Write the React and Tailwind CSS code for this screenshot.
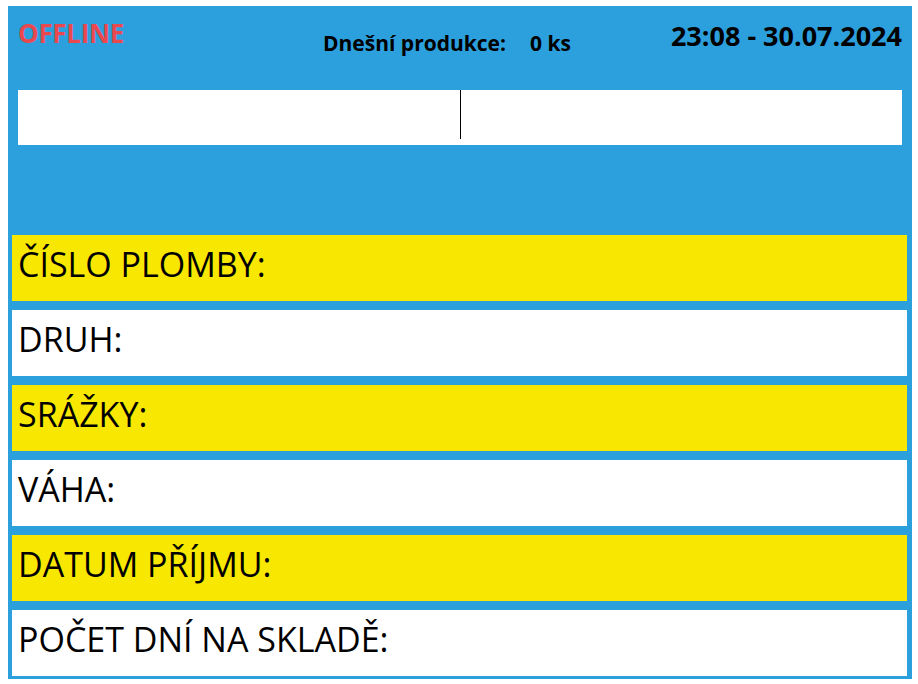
const rows = [
  { label: "ČÍSLO PLOMBY:", bg: "bg-[#f8e700]" },
  { label: "DRUH:", bg: "bg-white" },
  { label: "SRÁŽKY:", bg: "bg-[#f8e700]" },
  { label: "VÁHA:", bg: "bg-white" },
  { label: "DATUM PŘÍJMU:", bg: "bg-[#f8e700]" },
  { label: "POČET DNÍ NA SKLADĚ:", bg: "bg-white" },
];

const App = () => {
  return (
    <div
      className="w-[918px] h-[684px] bg-white pt-[6px] pl-[8px] overflow-hidden"
      style={{ fontFamily: '"Open Sans", "Noto Sans", sans-serif' }}
    >
      <div className="w-[904px] h-[673px] bg-[#2c9fdd] flex flex-col">
        {/* Header */}
        <div className="h-[84px] flex items-start px-[10px]">
          <div className="w-[305px] pt-[14px] text-[26px] font-bold text-[#e9484f] leading-none tracking-[-0.3px]">
            OFFLINE
          </div>
          <div className="pt-[27px] flex text-[21px] font-bold text-black leading-none">
            <span>Dnešní produkce:</span>
            <span className="ml-[24px]">0 ks</span>
          </div>
          <div className="ml-auto pt-[16px] text-[27px] font-bold text-black leading-none">
            23:08 - 30.07.2024
          </div>
        </div>

        {/* Inputs */}
        <div className="mx-[10px] h-[55px] bg-white flex">
          <div className="flex-1" />
          <div className="w-px h-[49px] bg-black" />
          <div className="flex-1" />
        </div>

        {/* Rows */}
        <div className="mt-[90px] pl-[4px] pr-[5px] flex flex-col gap-[9px]">
          {rows.map((row) => (
            <div key={row.label} className={`${row.bg} h-[66px] flex items-start pl-[6px] pt-[12px]`}>
              <span className="text-[34px] text-black leading-none">{row.label}</span>
            </div>
          ))}
        </div>
      </div>
    </div>
  );
};

export default App;
